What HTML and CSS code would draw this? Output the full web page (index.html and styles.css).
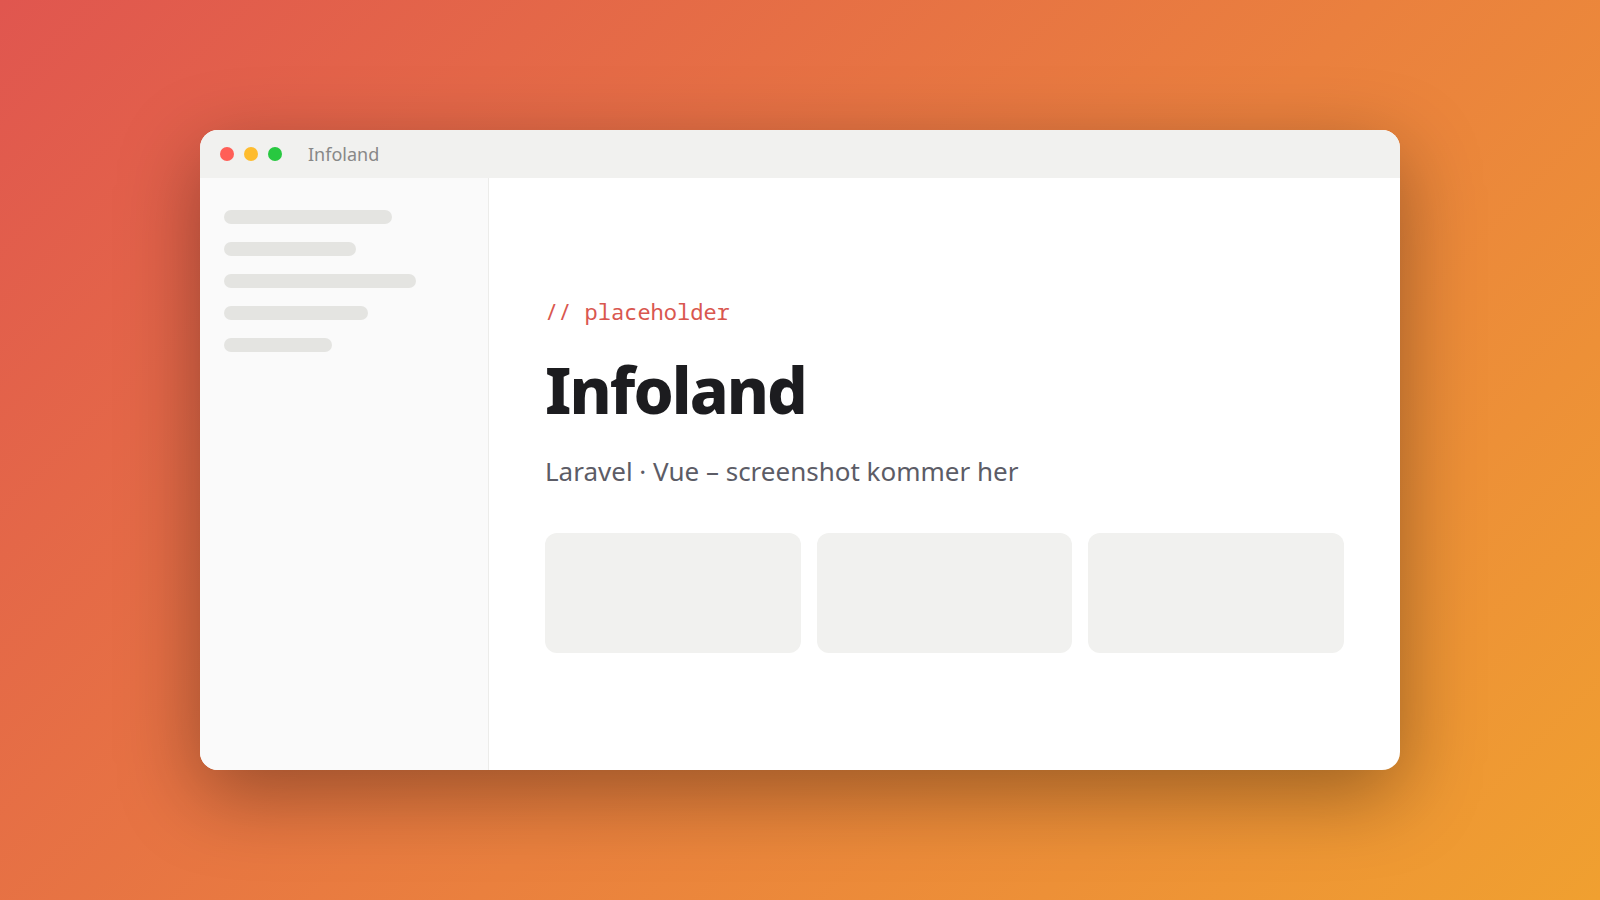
FILE: index.html
```
<!DOCTYPE html>
<html lang="da">

<head>
    <meta charset="UTF-8">
    <meta name="viewport" content="width=device-width, initial-scale=1.0">
    <title>Infoland</title>
    <link rel="stylesheet" href="styles.css">
</head>

<body>
    <div class="window">
        <header class="bar">
            <span class="dot red"></span>
            <span class="dot yellow"></span>
            <span class="dot green"></span>
            <span class="title">Infoland</span>
        </header>
        <div class="content">
            <aside class="side">
                <div class="line w70"></div>
                <div class="line w55"></div>
                <div class="line w80"></div>
                <div class="line w60"></div>
                <div class="line w45"></div>
            </aside>
            <main class="main">
                <p class="tag">// placeholder</p>
                <h1>Infoland</h1>
                <p class="sub">Laravel · Vue – screenshot kommer her</p>
                <div class="cards">
                    <div class="card"></div>
                    <div class="card"></div>
                    <div class="card"></div>
                </div>
            </main>
        </div>
    </div>
</body>

</html>
```
FILE: styles.css
```
* {
    margin: 0;
    padding: 0;
    box-sizing: border-box;
}

body {
    display: grid;
    place-items: center;
    min-height: 100vh;
    background: linear-gradient(135deg, #e0564f, #ea803e 55%, #f0a030);
    font-family: "Noto Sans", sans-serif;
}

.window {
    display: flex;
    flex-direction: column;
    width: 75%;
    min-height: 640px;
    border-radius: 18px;
    background-color: #fff;
    overflow: hidden;
    box-shadow: 0 24px 80px rgba(0, 0, 0, 0.35);
}

.bar {
    display: flex;
    align-items: center;
    gap: 10px;
    height: 48px;
    padding: 0 20px;
    background-color: #f1f1ef;
}

.dot {
    width: 14px;
    height: 14px;
    border-radius: 50%;
}

.red {
    background-color: #ff5f57;
}

.yellow {
    background-color: #febc2e;
}

.green {
    background-color: #28c840;
}

.title {
    margin-left: 16px;
    font-size: 18px;
    color: #888;
}

.content {
    display: flex;
    flex: 1;
}

.side {
    display: flex;
    flex-direction: column;
    gap: 18px;
    width: 289px;
    padding: 32px 24px;
    border-right: 1px solid #ececea;
    background-color: #fafafa;
}

.line {
    height: 14px;
    border-radius: 7px;
    background-color: #e4e4e1;
}

.w70 {
    width: 70%;
}

.w55 {
    width: 55%;
}

.w80 {
    width: 80%;
}

.w60 {
    width: 60%;
}

.w45 {
    width: 45%;
}

.main {
    display: flex;
    flex: 1;
    flex-direction: column;
    justify-content: center;
    padding: 0 56px;
}

.tag {
    margin-bottom: 20px;
    font-family: "Noto Sans Mono", "DejaVu Sans Mono", monospace;
    font-size: 22px;
    color: #d9574f;
}

h1 {
    margin-bottom: 20px;
    font-size: 64px;
    font-weight: 800;
    letter-spacing: -0.03em;
    color: #1c1c1f;
}

.sub {
    margin-bottom: 44px;
    font-size: 26px;
    color: #5c5c66;
}

.cards {
    display: grid;
    grid-template-columns: repeat(3, 1fr);
    gap: 16px;
}

.card {
    height: 120px;
    border-radius: 12px;
    background-color: #f1f1ef;
}
```
